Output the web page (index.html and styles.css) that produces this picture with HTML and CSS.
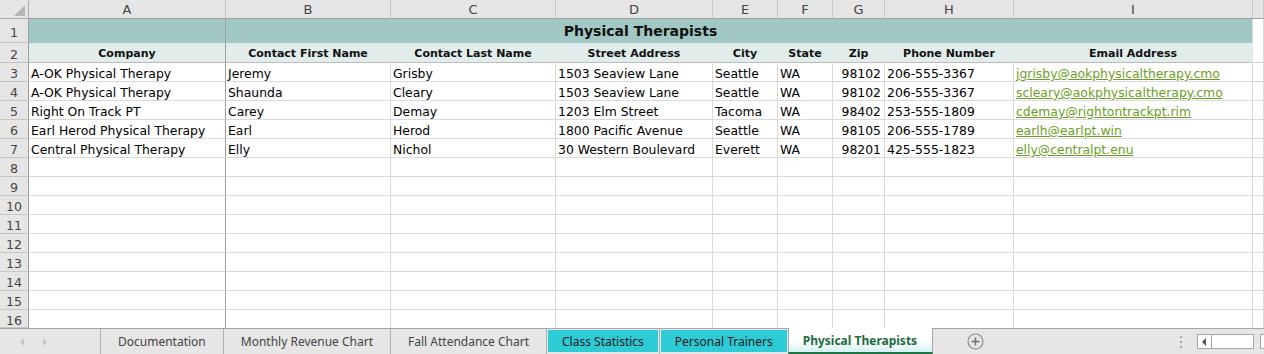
FILE: index.html
```html
<!DOCTYPE html>
<html lang="en">
<head>
  <meta charset="UTF-8">
  <title>Physical Therapists</title>
  <link rel="stylesheet" href="styles.css">
</head>
<body>
  <div class="sheet">
    <div class="row head">
      <div class="corner"><svg width="28" height="18" viewBox="0 0 28 18"><polygon points="25,5 25,16 14,16" fill="#b4b4b4"/></svg></div>
      <div class="ch">A</div><div class="ch">B</div><div class="ch">C</div><div class="ch">D</div><div class="ch">E</div>
      <div class="ch">F</div><div class="ch">G</div><div class="ch">H</div><div class="ch">I</div><div class="ch"></div>
    </div>

    <div class="row title-row">
      <div class="rh">1</div>
      <div class="title">Physical Therapists</div>
      <div class="c"></div>
    </div>

    <div class="row label-row">
      <div class="rh">2</div>
      <div class="lbl">Company</div>
      <div class="lbl">Contact First Name</div>
      <div class="lbl">Contact Last Name</div>
      <div class="lbl">Street Address</div>
      <div class="lbl">City</div>
      <div class="lbl">State</div>
      <div class="lbl">Zip</div>
      <div class="lbl">Phone Number</div>
      <div class="lbl">Email Address</div>
      <div class="c"></div>
    </div>

    <div class="row">
      <div class="rh">3</div>
      <div class="c">A-OK Physical Therapy</div><div class="c">Jeremy</div><div class="c">Grisby</div>
      <div class="c">1503 Seaview Lane</div><div class="c">Seattle</div><div class="c">WA</div>
      <div class="c num">98102</div><div class="c">206-555-3367</div>
      <div class="c"><a href="#">jgrisby@aokphysicaltherapy.cmo</a></div><div class="c"></div>
    </div>
    <div class="row">
      <div class="rh">4</div>
      <div class="c">A-OK Physical Therapy</div><div class="c">Shaunda</div><div class="c">Cleary</div>
      <div class="c">1503 Seaview Lane</div><div class="c">Seattle</div><div class="c">WA</div>
      <div class="c num">98102</div><div class="c">206-555-3367</div>
      <div class="c"><a href="#">scleary@aokphysicaltherapy.cmo</a></div><div class="c"></div>
    </div>
    <div class="row">
      <div class="rh">5</div>
      <div class="c">Right On Track PT</div><div class="c">Carey</div><div class="c">Demay</div>
      <div class="c">1203 Elm Street</div><div class="c">Tacoma</div><div class="c">WA</div>
      <div class="c num">98402</div><div class="c">253-555-1809</div>
      <div class="c"><a href="#">cdemay@rightontrackpt.rim</a></div><div class="c"></div>
    </div>
    <div class="row">
      <div class="rh">6</div>
      <div class="c">Earl Herod Physical Therapy</div><div class="c">Earl</div><div class="c">Herod</div>
      <div class="c">1800 Pacific Avenue</div><div class="c">Seattle</div><div class="c">WA</div>
      <div class="c num">98105</div><div class="c">206-555-1789</div>
      <div class="c"><a href="#">earlh@earlpt.win</a></div><div class="c"></div>
    </div>
    <div class="row">
      <div class="rh">7</div>
      <div class="c">Central Physical Therapy</div><div class="c">Elly</div><div class="c">Nichol</div>
      <div class="c">30 Western Boulevard</div><div class="c">Everett</div><div class="c">WA</div>
      <div class="c num">98201</div><div class="c">425-555-1823</div>
      <div class="c"><a href="#">elly@centralpt.enu</a></div><div class="c"></div>
    </div>

    <div class="row"><div class="rh">8</div><div class="c"></div><div class="c"></div><div class="c"></div><div class="c"></div><div class="c"></div><div class="c"></div><div class="c"></div><div class="c"></div><div class="c"></div><div class="c"></div></div>
    <div class="row"><div class="rh">9</div><div class="c"></div><div class="c"></div><div class="c"></div><div class="c"></div><div class="c"></div><div class="c"></div><div class="c"></div><div class="c"></div><div class="c"></div><div class="c"></div></div>
    <div class="row"><div class="rh">10</div><div class="c"></div><div class="c"></div><div class="c"></div><div class="c"></div><div class="c"></div><div class="c"></div><div class="c"></div><div class="c"></div><div class="c"></div><div class="c"></div></div>
    <div class="row"><div class="rh">11</div><div class="c"></div><div class="c"></div><div class="c"></div><div class="c"></div><div class="c"></div><div class="c"></div><div class="c"></div><div class="c"></div><div class="c"></div><div class="c"></div></div>
    <div class="row"><div class="rh">12</div><div class="c"></div><div class="c"></div><div class="c"></div><div class="c"></div><div class="c"></div><div class="c"></div><div class="c"></div><div class="c"></div><div class="c"></div><div class="c"></div></div>
    <div class="row"><div class="rh">13</div><div class="c"></div><div class="c"></div><div class="c"></div><div class="c"></div><div class="c"></div><div class="c"></div><div class="c"></div><div class="c"></div><div class="c"></div><div class="c"></div></div>
    <div class="row"><div class="rh">14</div><div class="c"></div><div class="c"></div><div class="c"></div><div class="c"></div><div class="c"></div><div class="c"></div><div class="c"></div><div class="c"></div><div class="c"></div><div class="c"></div></div>
    <div class="row"><div class="rh">15</div><div class="c"></div><div class="c"></div><div class="c"></div><div class="c"></div><div class="c"></div><div class="c"></div><div class="c"></div><div class="c"></div><div class="c"></div><div class="c"></div></div>
    <div class="row last"><div class="rh">16</div><div class="c"></div><div class="c"></div><div class="c"></div><div class="c"></div><div class="c"></div><div class="c"></div><div class="c"></div><div class="c"></div><div class="c"></div><div class="c"></div></div>
  </div>

  <div class="tabbar">
    <div class="tab-nav">
      <span class="arrow left"></span>
      <span class="arrow right"></span>
    </div>
    <div class="tab"><span>Documentation</span></div>
    <div class="tab"><span>Monthly Revenue Chart</span></div>
    <div class="tab"><span>Fall Attendance Chart</span></div>
    <div class="tab colored"><span>Class Statistics</span></div>
    <div class="tab colored"><span>Personal Trainers</span></div>
    <div class="tab active"><span>Physical Therapists</span></div>
    <div class="tab-rest">
      <svg class="add" width="17" height="17" viewBox="0 0 17 17">
        <circle cx="8.5" cy="8.5" r="7.5" fill="none" stroke="#8c8c8c" stroke-width="1.2"/>
        <path d="M8.5 4.5v8M4.5 8.5h8" stroke="#6e6e6e" stroke-width="1.4"/>
      </svg>
      <span class="dots"></span>
      <div class="hscroll">
        <span class="btn"><svg width="5" height="8" viewBox="0 0 5 8"><polygon points="4,0 4,8 0,4" fill="#555"/></svg></span>
        <span class="track"></span>
        <span class="btn"><svg width="5" height="8" viewBox="0 0 5 8"><polygon points="1,0 1,8 5,4" fill="#555"/></svg></span>
      </div>
    </div>
  </div>
</body>
</html>
```

FILE: styles.css
```css
body {
  margin: 0;
  width: 1264px;
  height: 354px;
  overflow: hidden;
  background: #fff;
  font-family: 'DejaVu Sans', sans-serif;
  color: #000;
}
.sheet {
  display: flex;
  flex-direction: column;
}
.row {
  display: grid;
  grid-template-columns: 29px 197px 165px 165px 157px 65px 55px 52px 129px 239px 1fr;
  height: 19px;
  font-size: 12.4px;
}
.row > div {
  box-sizing: border-box;
  white-space: nowrap;
  overflow: hidden;
}
.c {
  border-right: 1px solid #dadada;
  border-bottom: 1px solid #dadada;
  padding: 2px 2px 0;
  line-height: 17px;
}
.row > .c:nth-child(2) {
  border-right-color: #9e9e9e;
}
.c.num {
  text-align: right;
  padding-right: 3px;
}
.c a {
  color: #6b9f25;
  text-decoration: underline;
}
.row.last { height: 18px; }
.row.last .c { border-bottom: none; }

/* headers */
.head { height: 19px; }
.corner {
  background: #e6e6e6;
  border-right: 1px solid #ababab;
  border-bottom: 1px solid #ababab;
}
.corner svg { display: block; }
.ch {
  background: #e6e6e6;
  border-right: 1px solid #c6c6c6;
  border-bottom: 1px solid #9e9e9e;
  text-align: center;
  font-size: 13px;
  line-height: 17px;
  padding-top: 1px;
  color: #444;
}
.rh {
  background: #e6e6e6;
  border-right: 1px solid #9e9e9e;
  border-bottom: 1px solid #c6c6c6;
  text-align: center;
  color: #444;
  font-size: 12.6px;
  line-height: 17px;
  padding-top: 2px;
}

/* row 1: merged title */
.title-row { height: 24px; }
.title-row .rh { padding-top: 5px; }
.title {
  grid-column: 2 / 11;
  position: relative;
  background: #a2c8c6;
  border-right: 1px solid #dadada;
  text-align: center;
  font-weight: bold;
  font-size: 14px;
  line-height: 21px;
  padding-top: 2px;
  color: #111;
}
.title::before {
  content: "";
  position: absolute;
  left: 196px;
  top: 0;
  bottom: 0;
  width: 1px;
  background: #9e9e9e;
}
.title-row .c { border-bottom: none; }

/* row 2: column labels */
.label-row { height: 20px; }
.label-row .rh { padding-top: 3px; }
.lbl {
  background: #e0edeb;
  border-right: 1px solid #e0edeb;
  border-bottom: 1px solid #bdbdbd;
  text-align: center;
  font-weight: bold;
  font-size: 11px;
  line-height: 17px;
  padding-top: 2px;
  color: #111;
}
.label-row > .lbl:nth-child(2) { border-right-color: #9e9e9e; }

/* sheet tabs */
.tabbar {
  display: flex;
  height: 25px;
  border-top: 1px solid #a6a6a6;
  background: #e6e6e6;
  font-family: 'Noto Sans', sans-serif;
  font-size: 12px;
  color: #444;
  white-space: nowrap;
}
.tab-nav {
  width: 100px;
  flex-shrink: 0;
  display: flex;
  align-items: center;
  gap: 19px;
  padding-left: 20px;
  box-sizing: border-box;
}
.arrow {
  width: 0;
  height: 0;
  border-top: 4px solid transparent;
  border-bottom: 4px solid transparent;
}
.arrow.left { border-right: 4px solid #c8c8c8; }
.arrow.right { border-left: 4px solid #c8c8c8; }
.tab {
  display: flex;
  flex-shrink: 0;
  padding: 1px 1px 2px;
  border-left: 1px solid #b0b0b0;
}
.tab span {
  display: flex;
  align-items: center;
  padding: 0 16px;
}
.tab.colored span {
  background: #2ccbd6;
  color: #1a1a1a;
  padding: 0 14px;
}
.tab.active {
  margin-top: -1px;
  padding: 0;
  border-left: 1px solid #a6a6a6;
  border-right: 1px solid #a6a6a6;
  border-bottom: 2px solid #217346;
  background: linear-gradient(#ffffff, #ffffff 55%, #d3f1f3);
}
.tab.active span {
  padding: 1px 15px 0 14px;
  font-weight: bold;
  color: #1e6b3c;
}
.tab-rest {
  flex: 1;
  display: flex;
  align-items: center;
  padding-left: 34px;
}
.add { display: block; }
.dots {
  width: 2px;
  height: 12px;
  margin-left: 196px;
  background: repeating-linear-gradient(#a6a6a6 0 2px, transparent 2px 5px);
}
.hscroll {
  display: flex;
  margin-left: 15px;
  height: 15px;
}
.hscroll .btn,
.hscroll .track {
  display: flex;
  align-items: center;
  justify-content: center;
  background: #fff;
  border: 1px solid #a6a6a6;
  box-sizing: border-box;
  height: 15px;
}
.hscroll .btn { width: 15px; }
.hscroll .track { width: 42px; border-left: none; margin-right: 6px; }
```
